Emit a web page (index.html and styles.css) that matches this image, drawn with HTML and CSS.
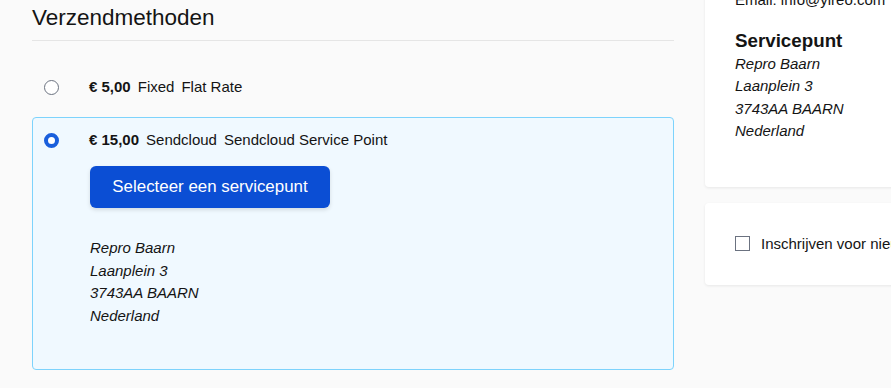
FILE: index.html
```html
<!DOCTYPE html>
<html lang="nl">
  <head>
    <meta charset="UTF-8" />
    <meta name="viewport" content="width=device-width, initial-scale=1.0" />
    <title>Verzendmethoden</title>
    <link rel="stylesheet" href="styles.css">
  </head>
  <body>
    <div id="checkout">
      <main class="shipping">
        <h2 class="section-title">Verzendmethoden</h2>
        <div class="methods">
          <label class="method">
            <span class="radio"></span>
            <span class="method-label">
              <strong>€ 5,00</strong>
              <span>Fixed</span>
              <span>Flat Rate</span>
            </span>
          </label>

          <div class="method selected">
            <div class="method-row">
              <span class="radio checked"></span>
              <span class="method-label">
                <strong>€ 15,00</strong>
                <span>Sendcloud</span>
                <span>Sendcloud Service Point</span>
              </span>
            </div>
            <div class="method-body">
              <button class="btn-primary" type="button">Selecteer een servicepunt</button>
              <address class="address">
                Repro Baarn<br />
                Laanplein 3<br />
                3743AA BAARN<br />
                Nederland
              </address>
            </div>
          </div>
        </div>
      </main>

      <aside class="sidebar">
        <div class="card summary">
          <p class="email">Email: info@yireo.com</p>
          <h3>Servicepunt</h3>
          <address class="address">
            Repro Baarn<br />
            Laanplein 3<br />
            3743AA BAARN<br />
            Nederland
          </address>
        </div>
        <div class="card newsletter">
          <label class="check">
            <span class="checkbox"></span>
            <span>Inschrijven voor nieuwsbrief</span>
          </label>
        </div>
      </aside>
    </div>
  </body>
</html>
```

FILE: styles.css
```css
body {
  margin: 0;
  background-color: #fafafa;
  color: #141414;
  font-family: "Liberation Sans", Arial, sans-serif;
  font-size: 15px;
  overflow: hidden;
}

#checkout {
  display: flex;
  gap: 31px;
  padding-left: 32px;
  align-items: flex-start;
}

.shipping {
  width: 642px;
  flex-shrink: 0;
  padding-top: 5px;
}

.section-title {
  margin: 0;
  padding-bottom: 10px;
  font-size: 22.5px;
  font-weight: normal;
  line-height: 25px;
  border-bottom: 1px solid #e5e5e5;
}

.methods {
  display: flex;
  flex-direction: column;
  gap: 7px;
  margin-top: 23px;
}

.method,
.method-row {
  display: flex;
  align-items: center;
}

.method {
  padding: 12px 10px 12px 11px;
  border: 1px solid transparent;
  border-radius: 4px;
  line-height: 20px;
}

.method.selected {
  display: block;
  background-color: #f0f9ff;
  border-color: #7dd3fc;
  padding-bottom: 42px;
}

.radio {
  width: 15px;
  height: 15px;
  box-sizing: border-box;
  border: 1px solid #6b7280;
  border-radius: 50%;
  background-color: #fff;
  margin-right: 30px;
  flex-shrink: 0;
}

.radio.checked {
  border: 4.5px solid #1a5fdc;
}

.method-label {
  display: flex;
  gap: 7px;
}

.method-body {
  padding-left: 46px;
}

.btn-primary {
  display: block;
  width: 240px;
  height: 42px;
  margin-top: 16px;
  border: 0;
  border-radius: 6px;
  background-color: #0b4ed4;
  color: #fff;
  font-family: inherit;
  font-size: 16.9px;
  box-shadow: 0 2px 4px rgba(0, 0, 0, 0.12);
}

.address {
  font-style: italic;
  line-height: 22.5px;
}

.method-body .address {
  margin-top: 29px;
}

.sidebar {
  width: 260px;
  flex-shrink: 0;
  margin-top: -41px;
}

.card {
  background-color: #fff;
  border-radius: 4px;
  box-shadow: 0 1px 3px rgba(0, 0, 0, 0.08);
  padding: 30px;
}

.summary {
  padding-bottom: 44px;
}

.email {
  margin: 0;
  line-height: 22.5px;
}

.summary h3 {
  margin: 16px 0 0;
  font-size: 18.75px;
  line-height: 25px;
}

.newsletter {
  margin-top: 16px;
  line-height: 22px;
}

.check {
  display: flex;
  align-items: center;
  gap: 11px;
  white-space: nowrap;
}

.checkbox {
  width: 15px;
  height: 15px;
  box-sizing: border-box;
  border: 1.5px solid #6b7280;
  background-color: #fff;
  flex-shrink: 0;
}
```
